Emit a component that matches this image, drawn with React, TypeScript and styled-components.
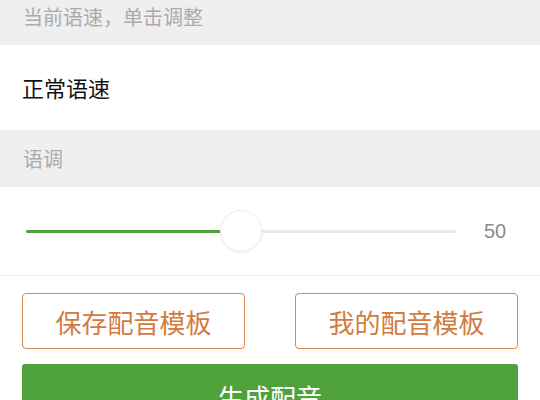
import React from "react";
import styled, { createGlobalStyle } from "styled-components";

const Global = createGlobalStyle`
  html, body { margin: 0; padding: 0; background: #ffffff; }
  body { font-family: "Noto Sans CJK SC", "Noto Sans", sans-serif; overflow: hidden; }
`;

const Page = styled.div`
  width: 540px;
  height: 400px;
  overflow: hidden;
  display: flex;
  flex-direction: column;
  background: #fff;
`;

const SectionLabel = styled.div<{ $shift?: number }>`
  flex: 0 0 auto;
  height: 57px;
  margin-top: ${(p) => (p.$shift ? `-${p.$shift}px` : "0")};
  background: #efefef;
  display: flex;
  align-items: center;
  padding-left: 23px;
  color: #ababab;
  font-size: 20px;
  line-height: 1;
`;

const ValueRow = styled.div`
  flex: 0 0 auto;
  height: 85px;
  display: flex;
  align-items: center;
  padding-left: 22px;
  padding-bottom: 2px;
  box-sizing: border-box;
  color: #111;
  font-size: 22px;
  line-height: 1;
`;

const SliderRow = styled.div`
  flex: 0 0 auto;
  height: 88px;
  display: flex;
  align-items: center;
  padding-left: 26px;
  border-bottom: 1px solid #f0f0f0;
`;

const Track = styled.div`
  position: relative;
  flex: 1;
  height: 3px;
  background: #e8e8e8;
  border-radius: 2px;
`;

const Fill = styled.div`
  position: absolute;
  left: 0;
  top: 0;
  bottom: 0;
  background: #4ea23b;
  border-radius: 2px;
`;

const Thumb = styled.div`
  position: absolute;
  top: 50%;
  width: 40px;
  height: 40px;
  margin-left: -21px;
  margin-top: -21px;
  border-radius: 50%;
  background: #fff;
  border: 1px solid #ececec;
  box-shadow: 0 1px 3px rgba(0, 0, 0, 0.06);
`;

const SliderValue = styled.span`
  margin-left: 27px;
  margin-right: 33px;
  width: 24px;
  text-align: center;
  font-family: "Liberation Sans", Arial, sans-serif;
  font-size: 20px;
  color: #8a8a8a;
`;

const Actions = styled.div`
  display: flex;
  flex-direction: column;
  gap: 15px;
  padding: 17px 22px 0;
`;

const OutlineRow = styled.div`
  display: flex;
  justify-content: space-between;
`;

const OutlineButton = styled.button`
  width: 223px;
  height: 56px;
  box-sizing: border-box;
  border: 1.5px solid #d68650;
  border-radius: 4px;
  background: #fff;
  color: #d27b3f;
  font-family: "Noto Sans CJK SC", sans-serif;
  font-size: 26px;
  padding: 0;
  display: flex;
  align-items: center;
  justify-content: center;
`;

const PrimaryButton = styled.button`
  width: 100%;
  height: 64px;
  flex: 0 0 auto;
  border: none;
  border-radius: 3px;
  background: #4fa23b;
  color: #fff;
  font-family: "Noto Sans CJK SC", sans-serif;
  font-size: 26px;
  padding: 0;
  display: flex;
  align-items: center;
  justify-content: center;
`;

export default function App() {
  const pitch = 50;
  return (
    <Page>
      <Global />
      <SectionLabel $shift={12}>当前语速，单击调整</SectionLabel>
      <ValueRow>正常语速</ValueRow>
      <SectionLabel>语调</SectionLabel>
      <SliderRow>
        <Track>
          <Fill style={{ width: `${pitch}%` }} />
          <Thumb style={{ left: `${pitch}%` }} />
        </Track>
        <SliderValue>{pitch}</SliderValue>
      </SliderRow>
      <Actions>
        <OutlineRow>
          <OutlineButton>保存配音模板</OutlineButton>
          <OutlineButton>我的配音模板</OutlineButton>
        </OutlineRow>
        <PrimaryButton>生成配音</PrimaryButton>
      </Actions>
    </Page>
  );
}
